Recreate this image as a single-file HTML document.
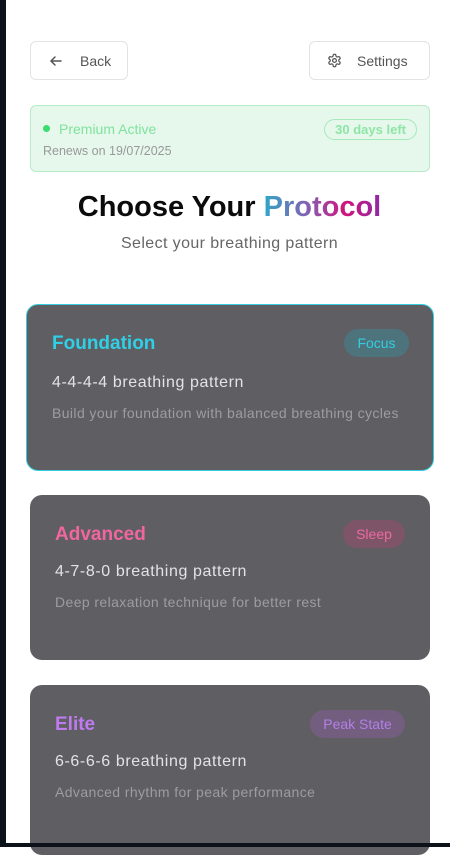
<!DOCTYPE html>
<html><head><meta charset="utf-8"><style>
*{box-sizing:border-box;margin:0;padding:0}
body{width:450px;height:847px;background:#fff;font-family:"Liberation Sans",sans-serif;position:relative;overflow:hidden}
.strip{position:absolute;left:0;top:0;width:6px;height:847px;background:#0c111a}
.bot{position:absolute;left:0;top:843px;width:450px;height:4px;background:#0c111a}
.btn{position:absolute;top:41px;height:39px;border:1px solid #e3e3e6;border-radius:6px;display:flex;align-items:center;font-size:14px;color:#555}
.prem{position:absolute;left:30px;top:105px;width:400px;height:67px;background:#e6f7ec;border:1px solid #b8ecc8;border-radius:6px}
.card{position:absolute;background:#5f5e63;border-radius:12px}
.t{position:absolute;font-size:19px;font-weight:bold}
.tag{position:absolute;height:28px;border-radius:14px;font-size:14px;line-height:28px;text-align:center}
.p{position:absolute;font-size:16px;letter-spacing:0.6px;color:#e3e3e6}
.d{position:absolute;font-size:14px;letter-spacing:0.4px;color:#9c9ca3}
</style></head><body>
<div class="strip"></div>
<div class="btn" style="left:30px;width:98px"><svg style="margin-left:18px" width="14" height="14" viewBox="0 0 14 14" fill="none" stroke="#555" stroke-width="1.5" stroke-linecap="round"><path d="M12 7H2M6 3L2 7l4 4"/></svg><span style="margin-left:17px">Back</span></div>
<div class="btn" style="left:309px;width:121px"><svg style="margin-left:17px" width="15" height="15" viewBox="0 0 24 24" fill="none" stroke="#555" stroke-width="2"><circle cx="12" cy="12" r="3"/><path d="M12.2 2h-.4a2 2 0 0 0-2 2v.2a2 2 0 0 1-1 1.7l-.4.3a2 2 0 0 1-2 0l-.2-.1a2 2 0 0 0-2.7.7l-.2.4a2 2 0 0 0 .7 2.7l.2.1a2 2 0 0 1 1 1.7v.5a2 2 0 0 1-1 1.7l-.2.1a2 2 0 0 0-.7 2.7l.2.4a2 2 0 0 0 2.7.7l.2-.1a2 2 0 0 1 2 0l.4.3a2 2 0 0 1 1 1.7v.2a2 2 0 0 0 2 2h.4a2 2 0 0 0 2-2v-.2a2 2 0 0 1 1-1.7l.4-.3a2 2 0 0 1 2 0l.2.1a2 2 0 0 0 2.7-.7l.2-.4a2 2 0 0 0-.7-2.7l-.2-.1a2 2 0 0 1-1-1.7v-.5a2 2 0 0 1 1-1.7l.2-.1a2 2 0 0 0 .7-2.7l-.2-.4a2 2 0 0 0-2.7-.7l-.2.1a2 2 0 0 1-2 0l-.4-.3a2 2 0 0 1-1-1.7V4a2 2 0 0 0-2-2z"/></svg><span style="margin-left:15px">Settings</span></div>
<div class="prem">
<div style="position:absolute;left:12px;top:19px;width:7px;height:7px;border-radius:50%;background:#3ddc6f"></div>
<div style="position:absolute;left:28px;top:15px;font-size:14px;color:#7ee39c">Premium Active</div>
<div style="position:absolute;left:12px;top:38px;font-size:12.5px;color:#999">Renews on 19/07/2025</div>
<div style="position:absolute;right:12px;top:13px;height:21px;padding:0 10px;border:1px solid #a6e9bb;border-radius:11px;font-size:13px;font-weight:bold;line-height:19px;color:#8ee6a6">30 days left</div>
</div>
<div style="position:absolute;left:0;width:459px;top:191px;text-align:center;font-size:29px;font-weight:bold;color:#0b0b0b;letter-spacing:0px">Choose Your <span style="background:linear-gradient(90deg,#2fa6c8,#8a5bb0 40%,#d0127c 70%,#8e2aa8);-webkit-background-clip:text;background-clip:text;color:transparent">Protocol</span></div>
<div style="position:absolute;left:0;width:459px;top:235px;text-align:center;font-size:16px;letter-spacing:0.4px;color:#666">Select your breathing pattern</div>

<div class="card" style="left:26px;top:304px;width:408px;height:167px;border:1.5px solid #33cde0">
<div class="t" style="left:25px;top:28px;color:#2fcfe6">Foundation</div>
<div class="tag" style="right:24px;top:24px;width:65px;background:#4d747d;color:#33cde0">Focus</div>
<div class="p" style="left:25px;top:69px">4-4-4-4 breathing pattern</div>
<div class="d" style="left:25px;top:100px">Build your foundation with balanced breathing cycles</div>
</div>
<div class="card" style="left:30px;top:495px;width:400px;height:165px">
<div class="t" style="left:25px;top:29px;color:#f0669f">Advanced</div>
<div class="tag" style="right:25px;top:25px;width:62px;background:#7d5468;color:#ee6aa0">Sleep</div>
<div class="p" style="left:25px;top:68px">4-7-8-0 breathing pattern</div>
<div class="d" style="left:25px;top:99px">Deep relaxation technique for better rest</div>
</div>
<div class="card" style="left:30px;top:685px;width:400px;height:170px">
<div class="t" style="left:25px;top:29px;color:#bf7af0">Elite</div>
<div class="tag" style="right:25px;top:25px;width:95px;background:#735e80;color:#b47ee8">Peak State</div>
<div class="p" style="left:25px;top:68px">6-6-6-6 breathing pattern</div>
<div class="d" style="left:25px;top:99px">Advanced rhythm for peak performance</div>
</div>
<div class="bot"></div>
</body></html>
